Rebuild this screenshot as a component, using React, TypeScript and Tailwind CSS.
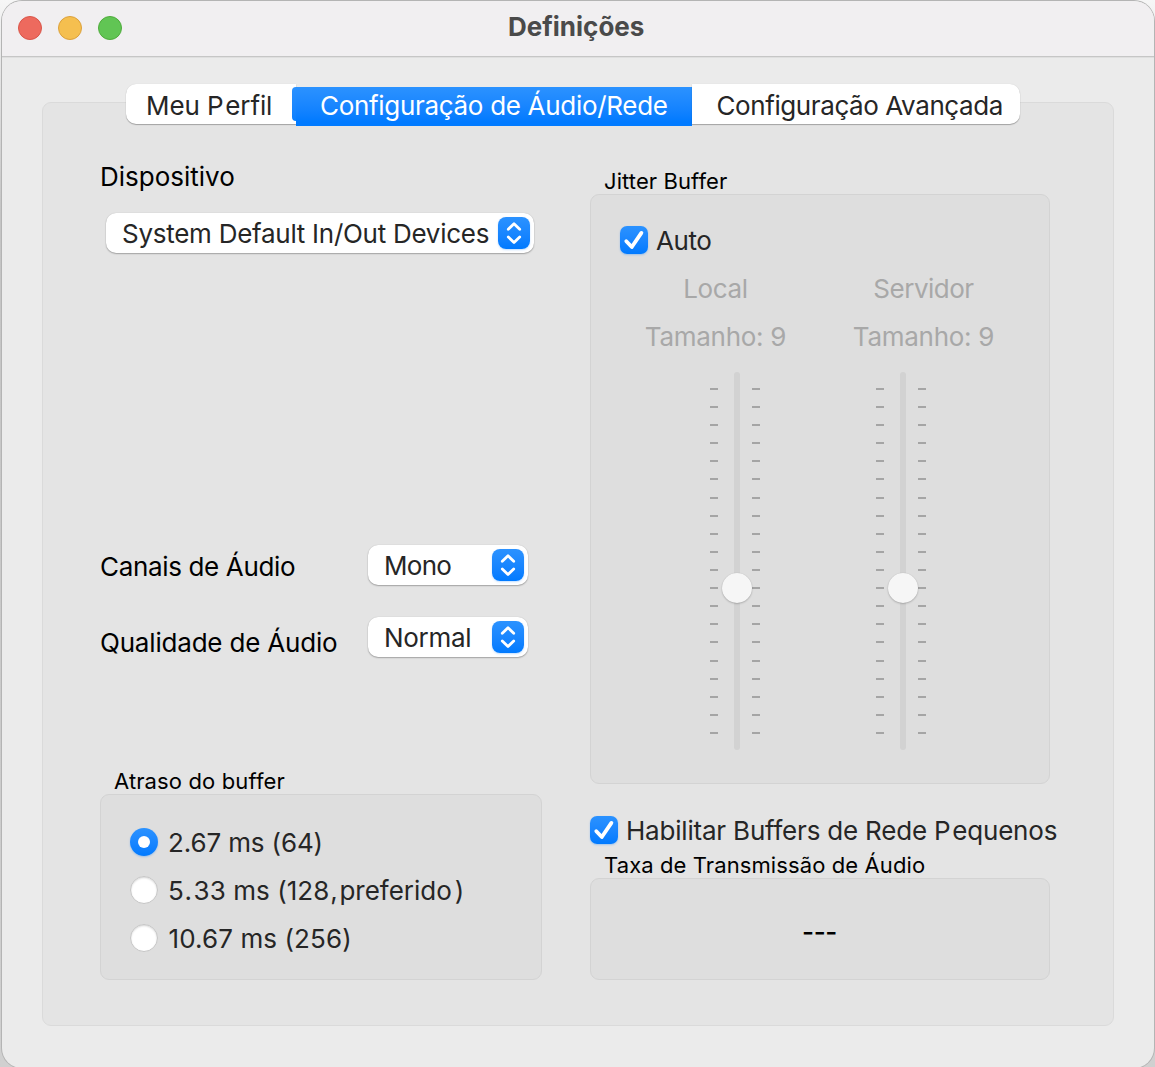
import type { ReactNode } from "react";

const TICK_GAPS = [0, 16, 16, 16, 16, 16, 17, 16, 16, 16, 16, 16, 16, 16, 16, 17, 16, 16, 16, 16];

function Tab({ children, className }: { children: ReactNode; className: string }) {
  return (
    <button
      className={`h-10 bg-white pb-px text-left text-[#262626] shadow-[0_1px_1px_rgba(0,0,0,0.28),0_0_1px_rgba(0,0,0,0.15)] ${className}`}
    >
      <span className="mt-[3px] block h-[31px]">{children}</span>
    </button>
  );
}

function Select({ children, className }: { children: ReactNode; className: string }) {
  return (
    <button
      className={`flex h-10 items-center justify-between rounded-[10px] bg-white pr-1 pl-4 text-[#262626] shadow-[0_1px_1.5px_rgba(0,0,0,0.28),0_0_1px_rgba(0,0,0,0.2)] ${className}`}
    >
      <span className="mt-px h-[31px]">{children}</span>
      <span className="size-8 rounded-[8px] bg-linear-to-b from-[#2b92ff] to-[#007aff] shadow-[0_1px_2px_rgba(0,122,255,0.25)]">
        <svg viewBox="0 0 32 32" className="size-8" fill="none" stroke="white" strokeWidth="2.8" strokeLinecap="round" strokeLinejoin="round">
          <path d="M10.3 12.2 16 6.7l5.7 5.5M10.3 20 16 25.5l5.7-5.5" />
        </svg>
      </span>
    </button>
  );
}

function Checkbox({ children }: { children: ReactNode }) {
  return (
    <label className="flex h-7 items-center gap-2 text-[#262626]">
      <span className="size-7 rounded-[7px] bg-linear-to-b from-[#2b92ff] to-[#007aff] shadow-[0_1px_2px_rgba(0,122,255,0.3)]">
        <svg viewBox="0 0 28 28" className="size-7" fill="none" stroke="white" strokeWidth="3.8" strokeLinecap="round" strokeLinejoin="round">
          <path d="M6.3 15.2 11.8 21 21.4 6.9" />
        </svg>
      </span>
      <span className="h-[31px]">{children}</span>
    </label>
  );
}

function Radio({ checked = false, children }: { checked?: boolean; children: ReactNode }) {
  return (
    <label className="flex h-7 items-center gap-[10px] text-[#262626]">
      {checked ? (
        <span className="flex size-7 items-center justify-center rounded-full bg-linear-to-b from-[#2b92ff] to-[#007aff] shadow-[0_1px_2px_rgba(0,122,255,0.3)]">
          <span className="size-3 rounded-full bg-white" />
        </span>
      ) : (
        <span className="size-7 rounded-full border border-[#c6c6c6] bg-white shadow-[inset_0_1px_2px_rgba(0,0,0,0.16)]" />
      )}
      <span className="mt-px h-[31px]">{children}</span>
    </label>
  );
}

function Group({ title, titleClass, className, children }: { title: string; titleClass: string; className: string; children: ReactNode }) {
  return (
    <section>
      <h2 className={`h-[26px] text-[22px] leading-[26px] whitespace-nowrap text-black ${titleClass}`}>{title}</h2>
      <div className={`rounded-[9px] border border-[#d3d3d3] bg-[#dedede] ${className}`}>{children}</div>
    </section>
  );
}

function Ticks() {
  return (
    <div className="flex w-2 flex-col pt-4">
      {TICK_GAPS.map((gap, i) => (
        <span key={i} className="h-[2px] w-2 shrink-0 bg-[#a5a5a5]" style={{ marginTop: gap }} />
      ))}
    </div>
  );
}

function Slider() {
  return (
    <div className="relative flex h-[378px] w-[50px]">
      <Ticks />
      <div className="mr-3 ml-4 h-[378px] w-[6px] rounded-full bg-[#d2d2d2]" />
      <Ticks />
      <span className="absolute top-[201px] left-3 size-[30px] rounded-full bg-[#f6f6f6] shadow-[0_1px_2px_rgba(0,0,0,0.2),0_0_1px_rgba(0,0,0,0.15)]" />
    </div>
  );
}

export default function App() {
  return (
    <div className="h-[1067px] w-[1155px] overflow-hidden bg-linear-to-b from-[#f6f6f6] via-[#c4c4c4] via-20% to-[#d0d0d0] pt-px pl-[2px] font-['Inter',sans-serif] text-[26px] leading-[31px] whitespace-nowrap">
      <div className="h-[1067px] w-[1152px] overflow-hidden rounded-[20px] bg-[#ebebeb] shadow-[0_0_0_1px_#b4b4b4]">
        <header className="flex h-14 items-start border-b border-[#c6c6c6] bg-[#f1eff1] shadow-[0_1px_0_#dfdfdf]">
          <div className="flex gap-4 pt-[15px] pl-4">
            <span className="size-6 rounded-full border border-[#d95549] bg-[#ed6a5e]" />
            <span className="size-6 rounded-full border border-[#dba03c] bg-[#f5bf4f]" />
            <span className="size-6 rounded-full border border-[#4fab3c] bg-[#61c554]" />
          </div>
          <h1 className="ml-[386px] pt-[10px] font-bold text-[#4a4a4a]">Definições</h1>
        </header>

        <nav className="relative mt-[27px] ml-[124px] flex h-[42px]">
          <Tab className="w-[170px] rounded-l-[10px] pl-5">
            <span className="tracking-[-0.1px]">Meu </span>
            <span className="tracking-[1.7px]">P</span>
            <span className="tracking-[-0.1px]">erfil</span>
          </Tab>
          <span className="absolute top-[3px] left-[166px] h-[34px] w-1 rounded-l-[4px] bg-linear-to-b from-[#2b92ff] to-[#087eff]" />
          <button className="mt-[3px] h-[39px] w-[396px] bg-linear-to-b from-[#2b92ff] to-[#007aff] to-90% pt-[2px] pl-6 text-left tracking-[-0.31px] text-white">
            <span className="-mt-[5px] block h-[31px]">Configuração de Áudio/Rede</span>
          </button>
          <Tab className="w-[328px] rounded-r-[10px] pl-[24.5px] tracking-[-0.41px]">Configuração Avançada</Tab>
        </nav>

        <main className="-mt-6 ml-10 flex h-[924px] w-[1072px] gap-12 rounded-[9px] border border-[#dadada] bg-[#e4e4e4] pl-[57px]">
          <div className="w-[442px] pt-[58px]">
            <p className="text-black">Dispositivo</p>
            <Select className="mt-[21px] ml-[6px] w-[428px] tracking-[-0.269px]">System Default In/Out Devices</Select>
            <div className="mt-[292px] flex">
              <p className="w-[268px] pt-[6px] tracking-[-0.343px] text-black">Canais de Áudio</p>
              <Select className="w-40 tracking-[-0.712px]">Mono</Select>
            </div>
            <div className="mt-8 mb-[110px] flex">
              <p className="w-[268px] pt-[10px] tracking-[-0.19px] text-black">Qualidade de Áudio</p>
              <Select className="w-40 tracking-[-0.29px]">Normal</Select>
            </div>
            <Group title="Atraso do buffer" titleClass="pl-[14px] tracking-[0.13px]" className="flex h-[186px] flex-col gap-5 pt-[33px] pl-[29px]">
              <Radio checked>
                <span className="tracking-[-0.13px]">2.67 ms (64)</span>
              </Radio>
              <Radio>
                <span className="tracking-[1.5px]">5.</span>
                <span className="tracking-[0.05px]">33 ms (12</span>
                <span className="tracking-[1.6px]">8,</span>
                <span className="tracking-[-0.02px]">preferid</span>
                <span className="tracking-[3px]">o</span>)
              </Radio>
              <Radio>
                <span className="pl-[0.5px] tracking-[0.1px]">10.67 ms (256)</span>
              </Radio>
            </Group>
          </div>

          <div className="w-[460px] pt-[65px]">
            <Group title="Jitter Buffer" titleClass="pl-[14px] tracking-[0.097px]" className="h-[590px] pt-[31px] pl-[29px]">
              <Checkbox>
                <span className="tracking-[-0.4px]">Auto</span>
              </Checkbox>
              <div className="mt-[19px] -ml-[8.5px] grid w-[416px] grid-cols-2 gap-y-[17px] text-center text-[#a8a8a8]">
                <p className="tracking-[-0.325px]">Local</p>
                <p className="tracking-[-0.493px]">Servidor</p>
                <p className="tracking-[-0.276px]">Tamanho: 9</p>
                <p className="tracking-[-0.276px]">Tamanho: 9</p>
              </div>
              <div className="mt-5 ml-[90px] flex gap-[116px]">
                <Slider />
                <Slider />
              </div>
            </Group>
            <div className="mt-8 mb-2">
              <Checkbox>
                <span className="tracking-[-0.2px]">
                  Habilitar Buffers de Rede <span className="tracking-[1.7px]">P</span>equenos
                </span>
              </Checkbox>
            </div>
            <Group
              title="Taxa de Transmissão de Áudio"
              titleClass="pl-[14px] tracking-[0.1px]"
              className="h-[102px] pt-[37px] pr-px text-center font-medium tracking-[-0.4px] text-black"
            >
              ---
            </Group>
          </div>
        </main>
      </div>
    </div>
  );
}
